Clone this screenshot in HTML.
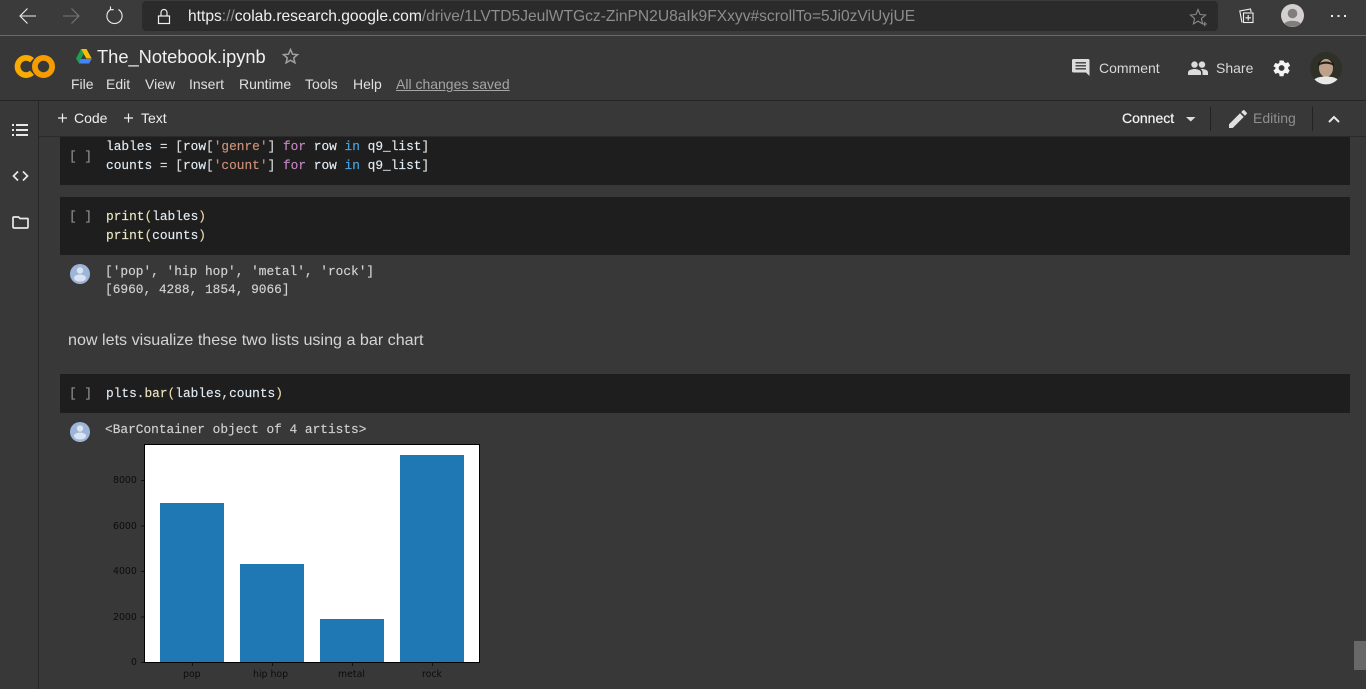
<!DOCTYPE html>
<html><head><meta charset="utf-8"><style>
html,body{margin:0;padding:0;background:#383838;width:1366px;height:689px;overflow:hidden}
body{position:relative;font-family:"Liberation Sans",sans-serif}
.a{position:absolute;white-space:pre}
.t{font-size:14px;color:#e0e0e0;line-height:16px}
.m{font-family:"Liberation Mono",monospace;font-size:12.82px;line-height:16px;color:#e4e4e4;-webkit-text-stroke:.15px currentColor}
.o{color:#d2d2d2}
.br{color:#8f8f8f}
.k{color:#c586c0}.b{color:#4ba3e0}.s{color:#ce9178}.f{color:#ece8c4}.v{color:#e2ebf3}.w{color:#dcdcdc}.g{color:#ecdca8}
.y{font-family:"DejaVu Sans",sans-serif;font-size:9.4px;line-height:10px;color:#0c0c0c}
svg{position:absolute;overflow:visible}
</style></head><body>
<!-- browser bar -->
<div class="a" style="left:0;top:0;width:1366px;height:35px;background:#3b3b3b"></div>
<div class="a" style="left:0;top:35px;width:1366px;height:1px;background:#6a6a6a"></div>
<div class="a" style="left:142px;top:1px;width:1076px;height:30px;background:#2b2b2b;border-radius:4px"></div>
<svg style="left:0;top:0" width="140" height="35" fill="none" stroke-width="1.100">
<path d="M36 16H21M27.500 8.500L20 16l7.500 7.500" stroke="#f0f0f0"/>
<path d="M63 16H78M71.500 8.500L79 16l-7.500 7.500" stroke="#777"/>
<path d="M110.500 9.500a7.600 7.600 0 1 0 8 0" stroke="#eee"/>
<path d="M110.500 6.500v3.200h3.200" stroke="#eee"/>
</svg>
<svg style="left:157px;top:8px" width="14" height="17" fill="none" stroke="#f0f0f0" stroke-width="1.200"><rect x="1.500" y="8" width="11" height="7.500"/><path d="M4 8V4.500a3 3 0 0 1 6 0V8"/></svg>
<div class="a" style="left:188px;top:8px;font-size:15.58px;line-height:18px;color:#f0f0f0">https<span style="color:#8d8d8d">://</span>colab.research.google.com<span style="color:#8d8d8d">/drive/1LVTD5JeulWTGcz-ZinPN2U8aIk9FXxyv#scrollTo=5Ji0zViUyjUE</span></div>
<svg style="left:1190px;top:8px" width="20" height="18" fill="none" stroke="#8a8a8a" stroke-width="1.100"><path d="M8 1.500l2.100 5 5.400.5-4.100 3.600 1.200 5.300L8 13.200l-4.600 2.700 1.200-5.300L.5 7l5.400-.5z"/><path d="M12.500 16h4.500M14.750 13.700v4.500"/></svg>
<svg style="left:1239px;top:8px" width="18" height="18" fill="none" stroke="#f0f0f0" stroke-width="1.100"><path d="M3 14.500L.8 3 11.500 1l.6 3"/><rect x="4.500" y="5" width="9.500" height="9.500" fill="#3b3b3b"/><path d="M9.200 7v5.500M6.500 9.800H12"/></svg>
<svg style="left:1281px;top:4px" width="23" height="23"><circle cx="11.500" cy="11.500" r="11.500" fill="#d3d0cf"/><circle cx="11.500" cy="9.500" r="4.800" fill="#807d7c"/><path d="M3.500 19.500c2-3.500 14-3.500 16 0a11.500 11.500 0 0 1-16 0z" fill="#807d7c"/></svg>
<svg style="left:1331px;top:14px" width="18" height="4" fill="#eee"><rect x="0" y="1" width="2" height="2"/><rect x="6.500" y="1" width="2" height="2"/><rect x="13" y="1" width="2" height="2"/></svg>
<!-- colab header -->
<svg style="left:14px;top:53px" width="42" height="26" fill="none" stroke-width="5.800"><circle cx="29.500" cy="13.500" r="8.600" stroke="#f59c00"/><path d="M18 7.200a8.600 8.600 0 1 0 0 12.600" stroke="#f9ab00"/></svg>
<svg style="left:76px;top:49px" width="16" height="15"><path d="M5 0h5.500l5.200 9.500h-5.400z" fill="#fbbc04"/><path d="M5 0l2.700 5L2.800 14 0 9.500z" fill="#1e9e50"/><path d="M4.500 10h11.200l-2.700 4.500H2.800z" fill="#4285f4"/></svg>
<div class="a" style="left:97px;top:46px;font-size:18.3px;line-height:22px;color:#f0f0f0">The_Notebook.ipynb</div>
<svg style="left:282px;top:48px" width="17" height="16" fill="none" stroke="#a0a0a0" stroke-width="1.500"><path d="M8.500 1.500l2 4.700 5 .4-3.800 3.300 1.200 4.900-4.400-2.600-4.400 2.600 1.200-4.900L1.500 6.600l5-.4z"/></svg>
<div class="a t" style="left:71px;top:76px">File</div>
<div class="a t" style="left:106px;top:76px">Edit</div>
<div class="a t" style="left:145px;top:76px">View</div>
<div class="a t" style="left:189px;top:76px">Insert</div>
<div class="a t" style="left:239px;top:76px">Runtime</div>
<div class="a t" style="left:305px;top:76px">Tools</div>
<div class="a t" style="left:353px;top:76px">Help</div>
<div class="a t" style="left:396px;top:76px;color:#a6a6a6;text-decoration:underline">All changes saved</div>
<svg style="left:1072px;top:59px" width="19" height="18"><path d="M1.500 0h14.500a1.500 1.500 0 0 1 1.500 1.500V17l-3.500-3.500H1.500A1.500 1.500 0 0 1 0 12V1.500A1.500 1.500 0 0 1 1.500 0z" fill="#dcdcdc"/><path d="M3.500 3.800h10.500M3.500 6.800h10.500M3.500 9.800h10.500" stroke="#3a3a3a" stroke-width="1.300"/></svg>
<div class="a t" style="left:1099px;top:60px;color:#d8d8d8">Comment</div>
<svg style="left:1188px;top:61px" width="20" height="14" fill="#dcdcdc"><circle cx="6.500" cy="3.600" r="3.200"/><circle cx="14" cy="3.600" r="3.200"/><path d="M0 14v-2.500C0 9 4 8 6.500 8S13 9 13 11.500V14z"/><path d="M14 8c2.500 0 6 1 6 3.500V14h-5.500v-3c0-1.200-.7-2.200-1.800-2.900z"/></svg>
<div class="a t" style="left:1216px;top:60px;color:#d8d8d8">Share</div>
<svg style="left:1272px;top:58px" width="20" height="20" viewBox="0 0 24 24" fill="#f4f4f4"><path d="M19.400 13a7.500 7.500 0 0 0 0-2l2.100-1.600a.5.500 0 0 0 .1-.6l-2-3.500a.5.500 0 0 0-.6-.2l-2.500 1a7.300 7.300 0 0 0-1.700-1L14 3.400a.5.500 0 0 0-.5-.4h-4a.5.500 0 0 0-.5.400L8.700 6a7.300 7.300 0 0 0-1.700 1l-2.500-1a.5.500 0 0 0-.6.200l-2 3.500a.5.500 0 0 0 .1.600L4.100 11a7.500 7.500 0 0 0 0 2L2 14.600a.5.500 0 0 0-.1.600l2 3.500c.1.200.4.300.6.200l2.500-1c.5.400 1.100.7 1.700 1l.3 2.600c0 .2.300.4.500.4h4c.2 0 .5-.2.500-.4l.3-2.600c.6-.3 1.200-.6 1.700-1l2.500 1c.2.100.5 0 .6-.2l2-3.500a.5.500 0 0 0-.1-.6zM11.500 15.500a3.500 3.500 0 1 1 0-7 3.500 3.500 0 0 1 0 7z"/></svg>
<svg style="left:1310px;top:52px" width="32" height="32"><circle cx="16" cy="16" r="16" fill="#2f3027"/><path d="M8 14c-1-9 16-9 16 0z" fill="#1e1a17"/><ellipse cx="16" cy="16" rx="7" ry="9" fill="#bfa08b"/><path d="M8.500 14c.5-6 14.500-6 15 0-3-3-12-3-15 0z" fill="#241e1a"/><path d="M4.500 27.500c3-4 20-4 23 0a16 16 0 0 1-23 0z" fill="#e8e8e6"/></svg>
<div class="a" style="left:0;top:100px;width:1366px;height:1px;background:#242424"></div>
<!-- sidebar + toolbar -->
<div class="a" style="left:38px;top:101px;width:1px;height:588px;background:#262626"></div>
<div class="a" style="left:39px;top:136px;width:1327px;height:1px;background:#2a2a2a"></div>
<svg style="left:12px;top:123px" width="16" height="14" fill="#e8e8e8"><rect x="0" y="1" width="2" height="2"/><rect x="4" y="1" width="12" height="2"/><rect x="0" y="6" width="2" height="2"/><rect x="4" y="6" width="12" height="2"/><rect x="0" y="11" width="2" height="2"/><rect x="4" y="11" width="12" height="2"/></svg>
<svg style="left:12px;top:170px" width="17" height="12" fill="none" stroke="#e8e8e8" stroke-width="1.700"><path d="M6 1.500L1.500 6 6 10.500M11 1.500L15.500 6 11 10.500"/></svg>
<svg style="left:12px;top:215px" width="17" height="14" fill="none" stroke="#e8e8e8" stroke-width="1.700"><path d="M1.500 2h5l1.500 1.500h7.500a.5.500 0 0 1 .5.500v8a1 1 0 0 1-1 1H2a1 1 0 0 1-1-1V2.500z"/></svg>
<svg style="left:58px;top:113px" width="10" height="10" stroke="#eee" stroke-width="1.200"><path d="M0 5h9M4.500 .5v9"/></svg>
<div class="a t" style="left:74px;top:110px;color:#eee">Code</div>
<svg style="left:124px;top:113px" width="10" height="10" stroke="#eee" stroke-width="1.200"><path d="M0 5h9M4.500 .5v9"/></svg>
<div class="a t" style="left:141px;top:110px;color:#eee">Text</div>
<div class="a t" style="left:1122px;top:110px;color:#f4f4f4;-webkit-text-stroke:.2px #f4f4f4">Connect</div>
<svg style="left:1186px;top:116px" width="10" height="6" fill="#ddd"><path d="M0 1h9.500L4.750 5.500z"/></svg>
<div class="a" style="left:1210px;top:107px;width:1px;height:24px;background:#222"></div>
<svg style="left:1229px;top:110px" width="18" height="18" fill="#e0e0e0"><path d="M0 18v-3.700L11 3.300l3.700 3.700L3.700 18zM12.200 2.100L14 .3a1 1 0 0 1 1.400 0l2.300 2.300a1 1 0 0 1 0 1.400L15.900 5.800z"/></svg>
<div class="a t" style="left:1253px;top:110px;color:#8f8f8f">Editing</div>
<div class="a" style="left:1312px;top:107px;width:1px;height:24px;background:#222"></div>
<svg style="left:1328px;top:115px" width="12" height="8" fill="none" stroke="#e8e8e8" stroke-width="2"><path d="M1 7l5-5 5 5"/></svg>
<!-- cells -->
<div class="a" style="left:60px;top:137px;width:1290px;height:48px;background:#1e1e1e"></div>
<div class="a" style="left:60px;top:197px;width:1290px;height:58px;background:#1e1e1e"></div>
<div class="a" style="left:60px;top:374px;width:1290px;height:39px;background:#1e1e1e"></div>
<div class="a m br" style="left:69px;top:149px">[ ]</div>
<div class="a m br" style="left:69px;top:209px">[ ]</div>
<div class="a m br" style="left:69px;top:386px">[ ]</div>
<div class="a m" style="left:106px;top:139px"><span class="v">lables</span> <span class="w">=</span> <span class="w">[</span><span class="v">row</span><span class="w">[</span><span class="s">'genre'</span><span class="w">]</span> <span class="k">for</span> <span class="v">row</span> <span class="b">in</span> <span class="v">q9_list</span><span class="w">]</span></div>
<div class="a m" style="left:106px;top:158px"><span class="v">counts</span> <span class="w">=</span> <span class="w">[</span><span class="v">row</span><span class="w">[</span><span class="s">'count'</span><span class="w">]</span> <span class="k">for</span> <span class="v">row</span> <span class="b">in</span> <span class="v">q9_list</span><span class="w">]</span></div>
<div class="a m" style="left:106px;top:209px"><span class="f">print</span><span class="g">(</span><span class="v">lables</span><span class="g">)</span></div>
<div class="a m" style="left:106px;top:228px"><span class="f">print</span><span class="g">(</span><span class="v">counts</span><span class="g">)</span></div>
<div class="a m" style="left:106px;top:386px"><span class="v">plts</span><span class="w">.</span><span class="f">bar</span><span class="g">(</span><span class="v">lables</span><span class="w">,</span><span class="v">counts</span><span class="g">)</span></div>
<div class="a m o" style="left:105px;top:264px">['pop', 'hip hop', 'metal', 'rock']</div>
<div class="a m o" style="left:105px;top:282px">[6960, 4288, 1854, 9066]</div>
<div class="a m o" style="left:105px;top:422px">&lt;BarContainer object of 4 artists&gt;</div>
<svg style="left:70px;top:264px" width="20" height="20"><circle cx="10" cy="10" r="10" fill="#9db5d8"/><circle cx="10" cy="6.500" r="3.200" fill="#dbe3f0"/><ellipse cx="10" cy="14" rx="6" ry="3.500" fill="#dbe3f0"/></svg>
<svg style="left:70px;top:422px" width="20" height="20"><circle cx="10" cy="10" r="10" fill="#9db5d8"/><circle cx="10" cy="6.500" r="3.200" fill="#dbe3f0"/><ellipse cx="10" cy="14" rx="6" ry="3.500" fill="#dbe3f0"/></svg>
<div class="a" style="left:68px;top:331px;font-size:16.12px;line-height:19px;color:#d4d4d4">now lets visualize these two lists using a bar chart</div>
<!-- chart -->
<svg style="left:0;top:0" width="1366" height="689">
<rect x="145" y="445" width="334" height="217" fill="#fff"/>
<rect x="160" y="503" width="64" height="159" fill="#1f77b4"/>
<rect x="240" y="564" width="64" height="98" fill="#1f77b4"/>
<rect x="320" y="619" width="64" height="43" fill="#1f77b4"/>
<rect x="400" y="455" width="64" height="207" fill="#1f77b4"/>
<path d="M144.500 444.500H479.500V662.500H144.500z" fill="none" stroke="#000" stroke-width="1"/>
<path d="M141 480.500h3M141 526h3M141 571.500h3M141 617h3M141 662.500h3M192.500 663v3M272.500 663v3M352.500 663v3M432.500 663v3" stroke="#111" stroke-width="1"/>
</svg>
<div class="a y" style="left:113px;top:476px">8000</div>
<div class="a y" style="left:113px;top:522px">6000</div>
<div class="a y" style="left:113px;top:567px">4000</div>
<div class="a y" style="left:113px;top:613px">2000</div>
<div class="a y" style="left:131px;top:658px">0</div>
<div class="a y" style="left:183px;top:670px">pop</div>
<div class="a y" style="left:253px;top:670px">hip hop</div>
<div class="a y" style="left:338px;top:670px">metal</div>
<div class="a y" style="left:422px;top:670px">rock</div>
<!-- scrollbar -->
<div class="a" style="left:1354px;top:641px;width:12px;height:29px;background:#686868"></div>
</body></html>
